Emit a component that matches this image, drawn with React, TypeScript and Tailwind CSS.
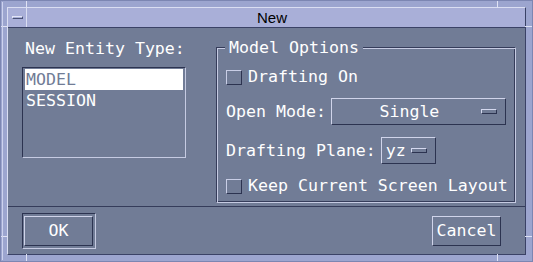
import type { ReactNode } from "react";

const mono = { fontFamily: '"DejaVu Sans Mono", "Liberation Mono", monospace' };

function Indicator() {
  return (
    <span className="block h-[5px] w-[16px] border border-t-[#d4d8ee] border-l-[#d4d8ee] border-r-[#2c3350] border-b-[#2c3350]" />
  );
}

function Check({ label }: { label: string }) {
  return (
    <div className="flex h-[20px] items-center gap-[6px]">
      <span className="block h-[15px] w-[16px] border border-t-[#c9cee6] border-l-[#c9cee6] border-r-[#2c3350] border-b-[#2c3350]" />
      <span className="leading-[20px]">{label}</span>
    </div>
  );
}

function Raised({ className, children }: { className: string; children: ReactNode }) {
  return (
    <div
      className={
        "flex items-center border border-t-[#d0d4ea] border-l-[#d0d4ea] border-r-[#2c3350] border-b-[#2c3350] " +
        className
      }
    >
      {children}
    </div>
  );
}

export default function App() {
  return (
    <div className="relative h-[262px] w-[533px] border border-[#7c86b2] bg-[#9ca5cf] p-[6px]">
      {/* resize corner ticks */}
      <span className="absolute left-[25px] top-0 h-[7px] w-px bg-[#dfe2f4]" />
      <span className="absolute right-[34px] top-0 h-[7px] w-px bg-[#dfe2f4]" />
      <span className="absolute bottom-0 left-[25px] h-[7px] w-px bg-[#dfe2f4]" />
      <span className="absolute bottom-0 right-[34px] h-[7px] w-px bg-[#dfe2f4]" />
      <span className="absolute left-0 top-[25px] h-px w-[7px] bg-[#dfe2f4]" />
      <span className="absolute right-0 top-[25px] h-px w-[7px] bg-[#dfe2f4]" />
      <span className="absolute bottom-[24px] left-0 h-px w-[7px] bg-[#dfe2f4]" />
      <span className="absolute bottom-[24px] right-0 h-px w-[7px] bg-[#dfe2f4]" />
      <span className="absolute bottom-[1px] left-[1px] top-[1px] w-px bg-[#cdd2ee]" />

      <div className="flex h-full flex-col border border-t-[#dadef2] border-l-[#dadef2] border-r-[#3a4266] border-b-[#3a4266]">
        {/* title bar */}
        <div className="flex h-[20px] border-b border-[#3a4266] bg-[#a9afd8]">
          <div className="flex w-[19px] items-center justify-center border-r border-[#dadef2]">
            <span className="block h-[3px] w-[11px] border border-t-[#e2e5f6] border-l-[#e2e5f6] border-r-[#4a5276] border-b-[#4a5276]" />
          </div>
          <div
            className="flex-1 pr-[8px] text-center text-[15px] leading-[19px] text-black"
            style={{ fontFamily: '"Liberation Sans", Arial, sans-serif' }}
          >
            New
          </div>
        </div>

        {/* body */}
        <div className="flex flex-1 flex-col bg-[#717c96] text-[16.6px] text-white" style={mono}>
          <div className="flex h-[179px] border-b border-[#353c5a]">
            {/* left column */}
            <div className="flex w-[194px] flex-col pl-[14px] pt-[11px]">
              <div className="ml-[3px] leading-[20px]">New Entity Type:</div>
              <div className="mt-[8px] h-[91px] w-[164px] border border-t-[#2c3350] border-l-[#2c3350] border-r-[#c6cbe2] border-b-[#c6cbe2] px-[2px] pt-px">
                <div className="h-[21px] bg-white px-px leading-[21px] text-[#717c96]">MODEL</div>
                <div className="h-[21px] px-px leading-[21px]">SESSION</div>
              </div>
            </div>

            {/* model options group */}
            <div className="relative ml-[14px] mt-[19px] h-[156px] w-[300px] border border-t-[#353c5a] border-l-[#353c5a] border-r-[#c6cbe2] border-b-[#c6cbe2] shadow-[inset_1px_1px_0_#c6cbe2,inset_-1px_-1px_0_#353c5a]">
              <div className="absolute left-[8px] top-[-10px] bg-[#717c96] px-[4px] leading-[20px]">Model Options</div>
              <div className="flex flex-col gap-[11px] pl-[9px] pt-[19px]">
                <Check label="Drafting On" />
                <div className="flex items-center gap-[5px]">
                  <span className="leading-[20px]">Open Mode:</span>
                  <Raised className="h-[27px] w-[175px] pl-[6px] pr-[8px]">
                    <span className="flex-1 text-center leading-[20px]">Single</span>
                    <Indicator />
                  </Raised>
                </div>
                <div className="mt-px flex items-center gap-[5px]">
                  <span className="leading-[20px]">Drafting Plane:</span>
                  <Raised className="h-[27px] w-[55px] gap-[5px] pl-[4px]">
                    <span className="leading-[20px]">yz</span>
                    <Indicator />
                  </Raised>
                </div>
                <div className="mt-px">
                  <Check label="Keep Current Screen Layout" />
                </div>
              </div>
            </div>
          </div>

          {/* buttons */}
          <div className="flex flex-1 items-start justify-between pl-[14px] pr-[24px] pt-[6px]">
            <div className="h-[36px] w-[74px] border border-t-[#2c3350] border-l-[#2c3350] border-r-[#c6cbe2] border-b-[#c6cbe2] pl-px pt-[2px]">
              <Raised className="h-[30px] w-[69px] justify-center">
                <span className="leading-[20px]">OK</span>
              </Raised>
            </div>
            <Raised className="mt-[3px] h-[30px] w-[69px] justify-center">
              <span className="leading-[20px]">Cancel</span>
            </Raised>
          </div>
        </div>
      </div>
    </div>
  );
}
